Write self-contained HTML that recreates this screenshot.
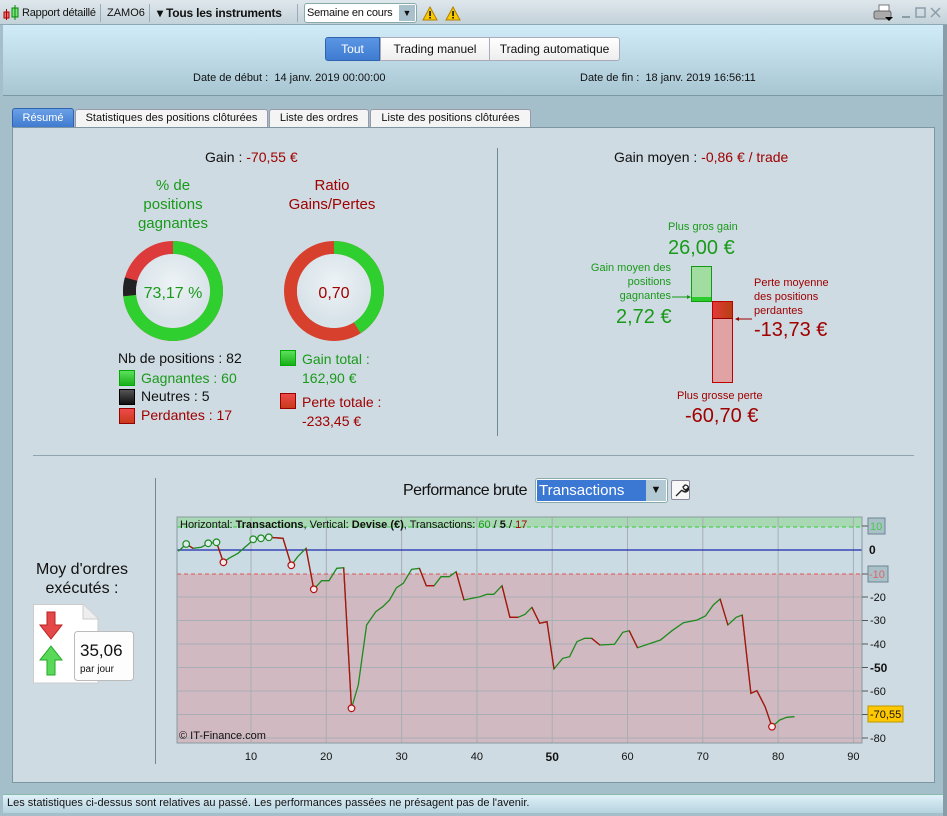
<!DOCTYPE html>
<html><head><meta charset="utf-8"><style>
*{margin:0;padding:0;box-sizing:border-box}
body{width:947px;height:816px;overflow:hidden;background:#a4bfca;font-family:"Liberation Sans",sans-serif;position:relative;color:#111}
.a{position:absolute;white-space:nowrap}
.g{color:#1a9a1a}.r{color:#a00000}
</style></head><body>
<!-- toolbar -->
<div class="a" style="left:0;top:0;width:947px;height:25px;background:linear-gradient(#dfe7ec,#c3d2d9);border-bottom:1px solid #8fa9b4"></div>
<svg class="a" style="left:3px;top:5px" width="18" height="16"><rect x="1" y="7" width="5" height="6" fill="#f07070" stroke="#a00"/><line x1="3.5" y1="4" x2="3.5" y2="15" stroke="#a00"/><rect x="9" y="3" width="6" height="9" fill="#7fe07f" stroke="#080"/><line x1="12" y1="0" x2="12" y2="15" stroke="#080"/></svg>
<div class="a" style="left:22px;top:7px;font-size:11px;letter-spacing:-0.2px">Rapport détaillé</div>
<div class="a" style="left:100px;top:4px;width:1px;height:18px;background:#9ab"></div>
<div class="a" style="left:107px;top:7px;font-size:11px">ZAMO6</div>
<div class="a" style="left:149px;top:4px;width:1px;height:18px;background:#9ab"></div>
<div class="a" style="left:157px;top:6px;font-size:12px;font-weight:bold;letter-spacing:-0.2px">▾ Tous les instruments</div>
<div class="a" style="left:297px;top:4px;width:1px;height:18px;background:#9ab"></div>
<div class="a" style="left:304px;top:3px;width:113px;height:20px;background:#fff;border:1px solid #8aa;border-radius:3px"></div>
<div class="a" style="left:307px;top:7px;font-size:11px;letter-spacing:-0.2px">Semaine en cours</div>
<div class="a" style="left:399px;top:5px;width:16px;height:16px;background:#a9c1cc;font-size:9px;text-align:center;line-height:16px">▼</div>
<svg class="a" style="left:422px;top:6px" width="50" height="15"><polygon points="8,1 15,14 1,14" fill="#f8c800" stroke="#b08000"/><rect x="7.3" y="5" width="1.5" height="5" fill="#000"/><rect x="7.3" y="11" width="1.5" height="1.5" fill="#000"/><polygon points="31,1 38,14 24,14" fill="#f8c800" stroke="#b08000"/><rect x="30.3" y="5" width="1.5" height="5" fill="#000"/><rect x="30.3" y="11" width="1.5" height="1.5" fill="#000"/></svg>
<svg class="a" style="left:873px;top:4px" width="70" height="18"><rect x="6" y="1" width="10" height="6" fill="#fff" stroke="#777"/><rect x="1" y="7" width="17" height="8" rx="2" fill="#aaa" stroke="#666"/><polygon points="12,13 20,13 16,17" fill="#000"/><line x1="29" y1="13" x2="37" y2="13" stroke="#8a9ea8" stroke-width="2"/><rect x="43" y="4" width="9" height="9" fill="none" stroke="#8a9ea8" stroke-width="1.5"/><path d="M58 4l9 9M67 4l-9 9" stroke="#8a9ea8" stroke-width="1.5"/></svg>
<!-- header -->
<div class="a" style="left:3px;top:25px;width:940px;height:71px;background:linear-gradient(#d0ecf8,#a8c6d2);border-bottom:1px solid #7d98a3"></div>
<div class="a" style="left:943px;top:25px;width:4px;height:791px;background:#889da8"></div>
<div class="a" style="left:325px;top:37px;width:55px;height:24px;background:linear-gradient(#5b96e4,#3f7bd0);border:1px solid #2f63b0;border-radius:3px 0 0 3px;color:#fff;font-size:12px;text-align:center;line-height:22px">Tout</div>
<div class="a" style="left:380px;top:37px;width:110px;height:24px;background:linear-gradient(#fff,#eee);border:1px solid #aab;font-size:12px;text-align:center;line-height:22px">Trading manuel</div>
<div class="a" style="left:489px;top:37px;width:131px;height:24px;background:linear-gradient(#fff,#eee);border:1px solid #aab;border-radius:0 3px 3px 0;font-size:12px;text-align:center;line-height:22px">Trading automatique</div>
<div class="a" style="left:193px;top:72px;font-size:11px">Date de début :&nbsp; 14 janv. 2019 00:00:00</div>
<div class="a" style="left:580px;top:72px;font-size:11px">Date de fin :&nbsp; 18 janv. 2019 16:56:11</div>
<!-- tabs -->
<div class="a" style="left:12px;top:108px;width:62px;height:20px;background:linear-gradient(#6aa0e6,#3f7bd0);border:1px solid #2f63b0;border-radius:3px 3px 0 0;color:#fff;font-size:11px;text-align:center;line-height:18px">Résumé</div>
<div class="a" style="left:75px;top:109px;width:193px;height:19px;background:#f4f4f4;border:1px solid #99a;border-radius:3px 3px 0 0;font-size:11px;text-align:center;line-height:17px">Statistiques des positions clôturées</div>
<div class="a" style="left:269px;top:109px;width:100px;height:19px;background:#f4f4f4;border:1px solid #99a;border-radius:3px 3px 0 0;font-size:11px;text-align:center;line-height:17px">Liste des ordres</div>
<div class="a" style="left:370px;top:109px;width:161px;height:19px;background:#f4f4f4;border:1px solid #99a;border-radius:3px 3px 0 0;font-size:11px;text-align:center;line-height:17px">Liste des positions clôturées</div>
<!-- panel -->
<div class="a" style="left:12px;top:127px;width:923px;height:656px;background:#cedbe2;border:1px solid #7e96a1"></div>
<div class="a" style="left:497px;top:148px;width:1px;height:288px;background:#6f8893"></div>
<div class="a" style="left:33px;top:455px;width:881px;height:1px;background:#8ea4ae"></div>
<div class="a" style="left:155px;top:478px;width:1px;height:286px;background:#6f8893"></div>
<!-- left stats -->
<div class="a" style="left:205px;top:149px;font-size:14px">Gain : <span class="r">-70,55 €</span></div>
<div class="a g" style="left:113px;top:176px;width:120px;text-align:center;font-size:15px;line-height:19px">% de<br>positions<br>gagnantes</div>
<div class="a r" style="left:272px;top:176px;width:120px;text-align:center;font-size:15px;line-height:19px">Ratio<br>Gains/Pertes</div>
<svg class="a" style="left:120px;top:238px" width="110" height="110">
<defs><radialGradient id="ig" cx="50%" cy="40%"><stop offset="0" stop-color="#eef3f6"/><stop offset="1" stop-color="#d8e3e9"/></radialGradient></defs>
<circle cx="53" cy="53" r="43.5" fill="none" stroke="#dd3b3b" stroke-width="13"/>
<circle cx="53" cy="53" r="43.5" fill="none" stroke="#2fcf2f" stroke-width="13" stroke-dasharray="200 300" transform="rotate(-90 53 53)"/>
<circle cx="53" cy="53" r="43.5" fill="none" stroke="#222" stroke-width="13" stroke-dasharray="0 200 16.7 300" transform="rotate(-90 53 53)"/>
<circle cx="53" cy="53" r="37" fill="url(#ig)"/>
<text x="53" y="60" text-anchor="middle" font-size="16" fill="#1a9a1a" font-family="Liberation Sans">73,17 %</text>
</svg>
<svg class="a" style="left:281px;top:238px" width="110" height="110">
<circle cx="53" cy="53" r="43.5" fill="none" stroke="#d8402e" stroke-width="13"/>
<circle cx="53" cy="53" r="43.5" fill="none" stroke="#2fcf2f" stroke-width="13" stroke-dasharray="112 300" transform="rotate(-90 53 53)"/>
<circle cx="53" cy="53" r="37" fill="url(#ig)"/>
<text x="53" y="60" text-anchor="middle" font-size="16" fill="#a00000" font-family="Liberation Sans">0,70</text>
</svg>
<div class="a" style="left:118px;top:350px;font-size:14px">Nb de positions : 82</div>
<div class="a" style="left:119px;top:370px;width:16px;height:16px;background:linear-gradient(#5de05d,#19b019);border:1px solid #0a0"></div>
<div class="a g" style="left:141px;top:370px;font-size:14px">Gagnantes : 60</div>
<div class="a" style="left:119px;top:389px;width:16px;height:16px;background:linear-gradient(#555,#111);border:1px solid #000"></div>
<div class="a" style="left:141px;top:388px;font-size:14px">Neutres : 5</div>
<div class="a" style="left:119px;top:408px;width:16px;height:16px;background:linear-gradient(#ee4a4a,#c83a1a);border:1px solid #900"></div>
<div class="a r" style="left:141px;top:407px;font-size:14px">Perdantes : 17</div>
<div class="a" style="left:280px;top:350px;width:16px;height:16px;background:linear-gradient(#5de05d,#19b019);border:1px solid #0a0"></div>
<div class="a g" style="left:302px;top:350px;font-size:14px;line-height:19px">Gain total :<br>162,90 €</div>
<div class="a" style="left:280px;top:393px;width:16px;height:16px;background:linear-gradient(#ee4a4a,#c83a1a);border:1px solid #900"></div>
<div class="a r" style="left:302px;top:393px;font-size:14px;line-height:19px">Perte totale :<br>-233,45 €</div>
<!-- right stats -->
<div class="a" style="left:614px;top:149px;font-size:14px">Gain moyen : <span class="r">-0,86 € / trade</span></div>
<div class="a g" style="left:668px;top:221px;font-size:11px">Plus gros gain</div>
<div class="a g" style="left:668px;top:237px;font-size:20px">26,00 €</div>
<div class="a g" style="left:585px;top:261px;width:86px;text-align:right;font-size:11px;line-height:14px">Gain moyen des<br>positions<br>gagnantes</div>
<div class="a g" style="left:616px;top:306px;font-size:20px">2,72 €</div>
<div class="a" style="left:691px;top:266px;width:21px;height:36px;background:#a1dca1;border:1px solid #129a12"></div>
<div class="a" style="left:692px;top:297px;width:19px;height:4px;background:#2ccc2c"></div>
<svg class="a" style="left:672px;top:292px" width="20" height="10"><line x1="0" y1="5" x2="18" y2="5" stroke="#129a12"/><polygon points="19,5 15,3 15,7" fill="#129a12"/></svg>
<div class="a" style="left:712px;top:301px;width:21px;height:82px;background:#e0a2a2;border:1px solid #b00"></div>
<div class="a" style="left:713px;top:302px;width:19px;height:17px;background:linear-gradient(90deg,#e33a3a,#b84010);border-bottom:1px solid #900"></div>
<svg class="a" style="left:734px;top:314px" width="18" height="10"><line x1="2" y1="5" x2="18" y2="5" stroke="#900"/><polygon points="1,5 5,3 5,7" fill="#900"/></svg>
<div class="a r" style="left:754px;top:276px;font-size:11px;line-height:14px">Perte moyenne<br>des positions<br>perdantes</div>
<div class="a r" style="left:754px;top:319px;font-size:20px">-13,73 €</div>
<div class="a r" style="left:677px;top:390px;font-size:11px">Plus grosse perte</div>
<div class="a r" style="left:685px;top:405px;font-size:20px">-60,70 €</div>
<!-- orders -->
<div class="a" style="left:22px;top:560px;width:120px;text-align:center;font-size:16px;line-height:19px">Moy d'ordres<br>exécutés :</div>
<svg class="a" style="left:33px;top:604px" width="104" height="82">
<path d="M0.5 0.5H50L65 15V79H0.5Z" fill="#fff" stroke="#ccc"/><path d="M50 0.5V15H65" fill="#eee" stroke="#ccc"/>
<path d="M14 8h8v13h7l-11 14-11-14h7z" fill="#e54848" stroke="#b22"/>
<path d="M18 42l11 14h-7v15h-8V56H7z" fill="#5ad85a" stroke="#2a2"/>
<rect x="41.5" y="27.5" width="59" height="49" rx="3" fill="#fdfdfd" stroke="#bbb"/>
<text x="47" y="52" font-size="17" font-family="Liberation Sans" fill="#111">35,06</text>
<text x="47" y="68" font-size="10" font-family="Liberation Sans" fill="#111">par jour</text>
</svg>
<!-- chart header -->
<div class="a" style="left:403px;top:482px;font-size:16px;letter-spacing:-0.5px">Performance brute</div>
<div class="a" style="left:535px;top:478px;width:133px;height:25px;background:#fff;border:1px solid #8aa;border-radius:3px"></div>
<div class="a" style="left:537px;top:480px;width:109px;height:21px;background:#3a78d4;color:#fff;font-size:15px;line-height:21px;padding-left:2px">Transactions</div>
<div class="a" style="left:646px;top:480px;width:20px;height:21px;background:#b3c9d3;font-size:11px;text-align:center;line-height:21px">▼</div>
<div class="a" style="left:671px;top:480px;width:19px;height:20px;background:#f8f8f8;border:1px solid #889;border-radius:2px"></div>
<svg class="a" style="left:673px;top:482px" width="16" height="16"><path d="M3 14l6-6M9 8a3.5 3.5 0 1 0 3-5l-2 2 1 2 2 1 2-2a3.5 3.5 0 0 1-5 3" fill="none" stroke="#222" stroke-width="1.3"/></svg>
<!-- chart -->
<svg class="a" style="left:160px;top:505px" width="783" height="265" font-family="Liberation Sans">
<g transform="translate(-160,-505)">
<rect x="177" y="517" width="685" height="226" fill="#cadbe3"/>
<rect x="177" y="517" width="685" height="10" fill="#a8d8b4"/>
<rect x="177" y="574" width="685" height="169" fill="#d0b9c0"/>
<g stroke="#a8aeb4" stroke-width="1">
<line x1="251" y1="517" x2="251" y2="743"/><line x1="326.3" y1="517" x2="326.3" y2="743"/><line x1="401.6" y1="517" x2="401.6" y2="743"/><line x1="476.9" y1="517" x2="476.9" y2="743"/><line x1="552.2" y1="517" x2="552.2" y2="743"/><line x1="627.5" y1="517" x2="627.5" y2="743"/><line x1="702.8" y1="517" x2="702.8" y2="743"/><line x1="778.1" y1="517" x2="778.1" y2="743"/><line x1="853.4" y1="517" x2="853.4" y2="743"/>
<line x1="177" y1="597" x2="862" y2="597"/><line x1="177" y1="620.5" x2="862" y2="620.5"/><line x1="177" y1="644" x2="862" y2="644"/><line x1="177" y1="667.5" x2="862" y2="667.5"/><line x1="177" y1="691" x2="862" y2="691"/><line x1="177" y1="714.5" x2="862" y2="714.5"/><line x1="177" y1="738" x2="862" y2="738"/>
</g>
<line x1="177" y1="527" x2="862" y2="527" stroke="#3c3" stroke-dasharray="4 3"/>
<line x1="177" y1="574" x2="862" y2="574" stroke="#d55" stroke-dasharray="4 3"/>
<line x1="177" y1="550" x2="862" y2="550" stroke="#1a2ab0" stroke-width="1.2"/>
<rect x="177" y="517" width="685" height="226" fill="none" stroke="#8a9aa2"/>
<polyline fill="none" stroke="#1f8a1f" stroke-width="1.3" points="178.4,551.3 186.2,544 193,548.3 201.3,547.3 208.2,543.3 216.5,542.3 223.4,562.3 228.9,558.3 238,553.3 249.5,543.3 253.2,539.3 261,538.3 268.8,537.3 283,538.3 291.3,565.3 297.7,556.7 306,548.3 313.8,589.3 321.6,580.7 329,580.7 336.8,568.3 343.7,567.7 351.5,708.3 358.3,685 366.6,625 375.8,611.7 382.7,606.7 389.6,600 396.5,587.7 403.3,583.3 411.6,569.3 419.4,568.3 426.3,585.7 434.1,585.7 441,576.7 449.3,576.7 456.1,571.7 464,600 472.2,598.3 480,596.7 486.9,594.3 493.8,594.3 502,585.7 509.9,617.3 518.1,617.3 525,614.3 531.9,607.3 539.7,623.3 547,621.7 554,669 562.7,658.3 569.6,656.7 576.9,641.7 584.7,638.3 591.6,638.3 599.8,645 614.5,644.3 622.8,632.3 629.2,630.7 637.5,647.7 660.5,640 672,630.7 683.4,622.7 697.2,620 705.4,616 713.3,605 720.1,599 727.9,625 736.2,617.3 742.2,615 750.9,693.3 756.9,690.7 765.1,706.7 772,726.7 779.8,720 786.7,717.3 794.5,716.7"/>
<g fill="none" stroke="#b01010" stroke-width="1.3">
<polyline points="186.2,544 193,548.3"/><polyline points="216.5,542.3 223.4,562.3"/><polyline points="268.8,537.3 283,538.3 291.3,565.3"/><polyline points="306,548.3 313.8,589.3"/><polyline points="343.7,567.7 351.5,708.3"/><polyline points="419.4,568.3 426.3,585.7 434.1,585.7"/><polyline points="456.1,571.7 464,600"/><polyline points="502,585.7 509.9,617.3 518.1,617.3"/><polyline points="531.9,607.3 539.7,623.3 547,621.7 554,669"/><polyline points="591.6,638.3 599.8,645"/><polyline points="629.2,630.7 637.5,647.7"/><polyline points="720.1,599 727.9,625"/><polyline points="742.2,615 750.9,693.3 756.9,690.7 765.1,706.7 772,726.7"/>
</g>
<g fill="#e0ecf0" stroke="#1f8a1f" stroke-width="1.2"><circle cx="186.2" cy="544" r="3.3"/><circle cx="208.2" cy="543.3" r="3.3"/><circle cx="216.5" cy="542.3" r="3.3"/><circle cx="253.2" cy="539.3" r="3.3"/><circle cx="261" cy="538.3" r="3.3"/><circle cx="268.8" cy="537.3" r="3.3"/></g>
<g fill="#f4e8ea" stroke="#b01010" stroke-width="1.2"><circle cx="223.4" cy="562.3" r="3.3"/><circle cx="291.3" cy="565.3" r="3.3"/><circle cx="313.8" cy="589.3" r="3.3"/><circle cx="351.5" cy="708.3" r="3.3"/><circle cx="772" cy="726.7" r="3.3"/></g>
<text x="180" y="528" font-size="11" fill="#111">Horizontal: <tspan font-weight="bold">Transactions</tspan>, Vertical: <tspan font-weight="bold">Devise (€)</tspan>, Transactions: <tspan fill="#1a9a1a">60</tspan> / <tspan font-weight="bold">5</tspan> / <tspan fill="#a00000">17</tspan></text>
<text x="179" y="739" font-size="11" fill="#111">© IT-Finance.com</text>
<g stroke="#555"><line x1="862" y1="526" x2="868" y2="526"/><line x1="862" y1="574" x2="868" y2="574"/><line x1="862" y1="597" x2="868" y2="597"/><line x1="862" y1="620.5" x2="868" y2="620.5"/><line x1="862" y1="644" x2="868" y2="644"/><line x1="862" y1="667.5" x2="868" y2="667.5"/><line x1="862" y1="691" x2="868" y2="691"/><line x1="862" y1="714.5" x2="868" y2="714.5"/><line x1="862" y1="738" x2="868" y2="738"/></g>
<rect x="868" y="518" width="17" height="16" fill="#a9c0c8" stroke="#6d8690"/><text x="870" y="530" font-size="11" fill="#4c4">10</text>
<text x="869" y="554" font-size="12" font-weight="bold" fill="#111">0</text>
<rect x="868" y="566" width="20" height="16" fill="#a9c0c8" stroke="#6d8690"/><text x="869" y="578" font-size="11" fill="#d66">-10</text>
<g font-size="11" fill="#111"><text x="870" y="601">-20</text><text x="870" y="624">-30</text><text x="870" y="648">-40</text><text x="870" y="672" font-size="12" font-weight="bold">-50</text><text x="870" y="695">-60</text><text x="870" y="742">-80</text></g>
<rect x="868" y="706" width="35" height="16" fill="#ffc800" stroke="#b90"/><text x="870" y="718" font-size="11" fill="#111">-70,55</text>
<g font-size="11" fill="#111" text-anchor="middle"><text x="251" y="760">10</text><text x="326.3" y="760">20</text><text x="401.6" y="760">30</text><text x="476.9" y="760">40</text><text x="552.2" y="761" font-size="12" font-weight="bold">50</text><text x="627.5" y="760">60</text><text x="702.8" y="760">70</text><text x="778.1" y="760">80</text><text x="853.4" y="760">90</text></g>
</g></svg>
<!-- status -->
<div class="a" style="left:3px;top:794px;width:940px;height:19px;background:linear-gradient(#e0f0f8,#b5d3df);border-top:1px solid #8ba"></div>
<div class="a" style="left:7px;top:797px;font-size:11px">Les statistiques ci-dessus sont relatives au passé. Les performances passées ne présagent pas de l'avenir.</div>
</body></html>
